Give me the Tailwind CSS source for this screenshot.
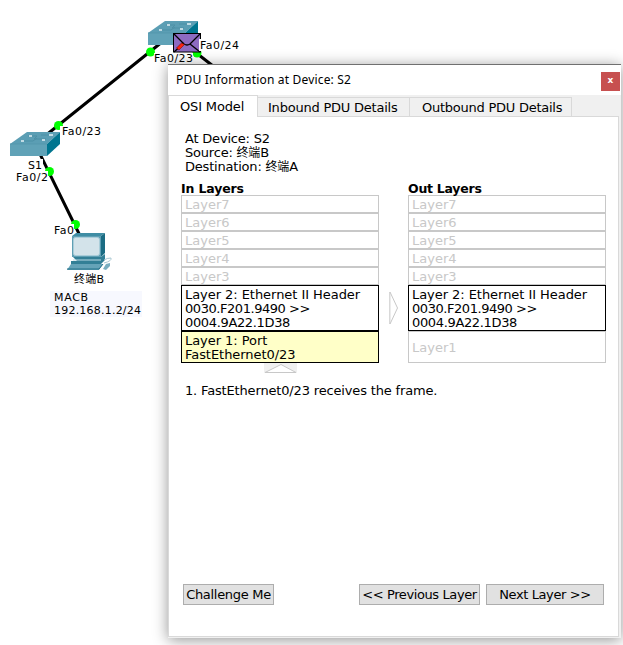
<!DOCTYPE html>
<html lang="en">
<head>
<meta charset="utf-8">
<title>PDU Information</title>
<script src="https://cdn.jsdelivr.net/npm/@tailwindcss/browser@4"></script>
</head>
<body class="relative h-[645px] w-[623px] overflow-hidden bg-white font-['DejaVu_Sans','Noto_Sans_CJK_SC',sans-serif] text-[13px] leading-[14px] text-black">
<!-- Network topology canvas -->
<svg class="absolute left-0 top-0 font-['DejaVu_Sans','Noto_Sans_CJK_SC',sans-serif] text-[11px]" width="623" height="645" viewBox="0 0 623 645">
  <defs>
    <g id="switch">
      <path d="M0 12L17 0H50L37 12Z" fill="#5b9eb4"/>
      <path d="M0 12H37V24H0Z" fill="#60a2b7"/>
      <path d="M37 12L50 0V12L37 24Z" fill="#00758f"/>
      <path d="M0 12H37" stroke="#5497ad"/>
      <path d="M18 4H27L24 7H36M12 9H23L27 6M31 3H40" fill="none" stroke="#4d90a6"/>
      <path d="M19 4H22M39 3H43M11 9H14M32 8H35" stroke="#e4f1f5" stroke-width="1.700"/>
    </g>
  </defs>
  <path d="M172 34L35 144L88 252M172 34L222 73" fill="none" stroke="#000" stroke-width="3"/>
  <g fill="#0f0">
    <circle cx="150.500" cy="52" r="4.500"/><circle cx="197" cy="53" r="4.500"/>
    <circle cx="58.500" cy="125.500" r="4.500"/><circle cx="49.500" cy="171.500" r="4.500"/><circle cx="75.500" cy="224.500" r="4.500"/>
  </g>
  <use href="#switch" x="148" y="21"/>
  <use href="#switch" x="10" y="132"/>
  <g>
    <rect x="173.500" y="33.500" width="27" height="18.500" fill="#8d6bc1" stroke="#000"/>
    <path d="M174 34L184 44Q187 46 190 44L200 34M174 52L184 43M200 52L190 44" fill="none" stroke="#000" stroke-width="1.300"/>
    <path d="M176.500 48L181.500 43L184.500 44.500L179 50Z" fill="#fa2410" stroke="#600" stroke-width=".5"/>
  </g>
  <!-- labels -->
  <path d="M199 39H240V51H199ZM154 53H193V64H154ZM60 126H101V137H60ZM28 159H43V171H28ZM15 171H48V183H15ZM54 224H74V236H54Z" fill="#fff"/>
  <text x="200" y="49" textLength="39">Fa0/24</text>
  <text x="154" y="62" textLength="39">Fa0/23</text>
  <text x="62" y="135" textLength="39">Fa0/23</text>
  <text x="28" y="169" textLength="14">S1</text>
  <text x="16" y="181" textLength="32">Fa0/2</text>
  <text x="54" y="234" textLength="20">Fa0</text>
  <!-- computer -->
  <path d="M72 236L76 233H105L101 236Z" fill="#3f8da4"/>
  <path d="M101 236L105 233V253L101 257Z" fill="#1b6c83"/>
  <path d="M72 236H101V257H72Z" fill="#5f9fb4"/>
  <rect x="73.500" y="237.500" width="26" height="18" rx="2" fill="#d3e3ea" stroke="#a9cdd9"/>
  <path d="M73 257H101L105 254V260L101 264H71V261H77Z" fill="#327f96"/>
  <path d="M73 260H101" stroke="#b9dae4"/>
  <path d="M71 264H103L99 270H67Z" fill="#65a3b8"/>
  <path d="M67 269H99L103 264" fill="none" stroke="#237088"/>
  <path d="M104 263Q112 261 111 258Q107 258 104 260" fill="none" stroke="#a9c8d2"/>
  <path d="M103 269L106 264L110 263V266L106 270Z" fill="#79aec0"/>
  <text x="74" y="283" textLength="30">终端B</text>
  <rect x="50" y="291" width="92" height="26" fill="#f7f8fe"/>
  <text x="54" y="301" textLength="34">MACB</text>
  <text x="54" y="314" textLength="87">192.168.1.2/24</text>
</svg>

<!-- PDU window -->
<main class="absolute left-[168px] top-[64px] flex h-[574px] w-[453px] flex-col border-t border-[#707070] bg-[#f0f0f0] shadow-[0_2px_14px_rgba(0,0,0,0.42)]">
  <header class="flex h-[30px] shrink-0 items-center justify-between bg-white pl-2 pr-px">
    <h1 class="whitespace-nowrap font-['Noto_Sans',sans-serif] text-[12px] leading-4 tracking-[0.18px]">PDU Information at Device: S2</h1>
    <button class="mt-0.5 flex h-[19px] w-[19px] items-center justify-center bg-[#c75050] pb-0.5 text-[9px] font-bold text-white">x</button>
  </header>
  <nav class="relative z-10 -mb-px flex h-[22px] shrink-0 items-end whitespace-nowrap">
    <span class="flex h-[22px] w-[90px] items-center border border-b-0 border-[#d9d9d9] bg-white pl-[11px] tracking-[-0.15px]">OSI Model</span>
    <span class="mt-0.5 flex h-5 w-[152px] items-center border border-l-0 border-[#d9d9d9] pl-[10px] pt-px tracking-[-0.22px]">Inbound PDU Details</span>
    <span class="mt-0.5 flex h-5 w-[162px] items-center border border-l-0 border-[#d9d9d9] pl-3 pt-px tracking-[-0.25px]">Outbound PDU Details</span>
  </nav>
  <section class="mr-0.5 flex h-[521px] flex-col border border-[#d9d9d9] bg-white pl-3 pr-3 pt-[15px]">
    <div class="pl-1 tracking-[-0.2px]">
      <p class="h-[14px]">At Device: S2</p>
      <p class="h-[14px]">Source: <span class="text-[12px]">终端</span>B</p>
      <p class="h-[14px]">Destination: <span class="text-[12px]">终端</span>A</p>
    </div>
    <div class="mt-[7px] flex h-[182px] justify-between">
      <div class="w-[198px]">
        <h2 class="h-[14px] pt-px text-[12.5px] font-bold tracking-[-0.15px]">In Layers</h2>
        <div class="text-[#c8c8c8]">
          <p class="h-[18px] border border-[#c8c8c8] pl-[3px] pt-[2px]">Layer7</p>
          <p class="h-[18px] border border-[#c8c8c8] pl-[3px] pt-[2px]">Layer6</p>
          <p class="h-[18px] border border-[#c8c8c8] pl-[3px] pt-[2px]">Layer5</p>
          <p class="h-[18px] border border-[#c8c8c8] pl-[3px] pt-[2px]">Layer4</p>
          <p class="h-[18px] border border-[#c8c8c8] pl-[3px] pt-[2px]">Layer3</p>
        </div>
        <p class="h-[46px] border border-black pl-[3px] pt-[2px] tracking-[-0.05px]">Layer 2: Ethernet II Header<br><span class="tracking-[-0.45px]">0030.F201.9490 &gt;&gt;</span><br><span class="tracking-[-0.35px]">0004.9A22.1D38</span></p>
        <p class="h-[32px] border border-black bg-[#ffffc8] pl-[3px] pt-[2px] tracking-[-0.05px]">Layer 1: Port<br>FastEthernet0/23</p>
      </div>
      <svg class="mt-[110px] h-[34px] w-[10px]" viewBox="0 0 10 34"><path d="M.5 1V33" stroke="#d9d9d9" stroke-width="2"/><path d="M1 1L8.500 17L1 33" fill="none" stroke="#c8c8c8"/></svg>
      <div class="w-[198px]">
        <h2 class="h-[14px] pt-px text-[12.5px] font-bold tracking-[-0.25px]">Out Layers</h2>
        <div class="text-[#c8c8c8]">
          <p class="h-[18px] border border-[#c8c8c8] pl-[3px] pt-[2px]">Layer7</p>
          <p class="h-[18px] border border-[#c8c8c8] pl-[3px] pt-[2px]">Layer6</p>
          <p class="h-[18px] border border-[#c8c8c8] pl-[3px] pt-[2px]">Layer5</p>
          <p class="h-[18px] border border-[#c8c8c8] pl-[3px] pt-[2px]">Layer4</p>
          <p class="h-[18px] border border-[#c8c8c8] pl-[3px] pt-[2px]">Layer3</p>
        </div>
        <p class="h-[46px] border border-black pl-[3px] pt-[2px] tracking-[-0.05px]">Layer 2: Ethernet II Header<br><span class="tracking-[-0.45px]">0030.F201.9490 &gt;&gt;</span><br><span class="tracking-[-0.35px]">0004.9A22.1D38</span></p>
        <p class="flex h-[32px] items-center border border-[#c8c8c8] pl-[3px] pt-px text-[#c8c8c8]">Layer1</p>
      </div>
    </div>
    <svg class="ml-[83px] h-[10px] w-[33px]" viewBox="0 0 33 10"><path d="M0 0H33V10H0Z" fill="#f0f0f0"/><path d="M1 9.500L17 1.500L32 9.500Z" fill="#fff" stroke="#c8c8c8"/></svg>
    <p class="mt-[11px] pl-1 tracking-[-0.16px]">1. FastEthernet0/23 receives the frame.</p>
    <footer class="mb-[31px] ml-0.5 mt-auto flex h-[21px] items-center pr-0.5 text-center whitespace-nowrap">
      <button class="h-[21px] w-[91px] border border-[#adadad] bg-[#e1e1e1] tracking-[-0.3px]">Challenge Me</button>
      <button class="ml-auto h-[21px] w-[121px] border border-[#adadad] bg-[#e1e1e1] tracking-[-0.4px]">&lt;&lt; Previous Layer</button>
      <button class="ml-1.5 h-[21px] w-[118px] border border-[#adadad] bg-[#e1e1e1] tracking-[-0.4px]">Next Layer &gt;&gt;</button>
    </footer>
  </section>
</main>
</body>
</html>
